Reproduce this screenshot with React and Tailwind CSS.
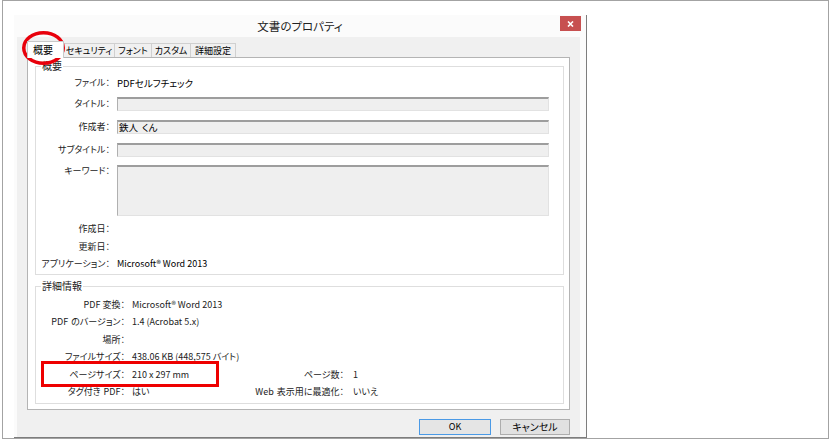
import React from 'react'

const font = "font-['Noto_Sans_CJK_JP','Noto_Sans',sans-serif] [font-feature-settings:'palt']"

function Field({ label, children, className = '' }) {
  return (
    <div className={`flex items-center ${className}`}>
      <div className="w-[74px] text-right text-[9px] leading-[12px] text-[#222] whitespace-nowrap">{label}：</div>
      <div className="ml-[7px] flex-1 flex items-center min-w-0">{children}</div>
    </div>
  )
}

function Input({ children, className = 'h-[14px]' }) {
  return (
    <div className={`flex-1 flex bg-[#efefef] border-t-2 border-t-[#9d9d9d] border-l border-l-[#b0b0b0] border-r border-r-[#e2e2e2] border-b border-b-[#e2e2e2] text-[9.5px] leading-[11px] text-black px-[1px] ${className}`}>
      {children}
    </div>
  )
}

function Info({ label, value, extraLabel, extraValue }) {
  return (
    <div className="flex items-center h-[17.5px] text-[9px] leading-[12px] text-[#222] whitespace-nowrap">
      <div className="w-[89px] text-right">{label}：</div>
      <div className={`ml-[7px] ${extraLabel ? 'w-[120px]' : ''}`}>{value}</div>
      {extraLabel && (
        <>
          <div className="w-[92px] text-right">{extraLabel}：</div>
          <div className="ml-[9px]">{extraValue}</div>
        </>
      )}
    </div>
  )
}

export default function App() {
  const tabs = ['セキュリティ', 'フォント', 'カスタム', '詳細設定']
  const tabWidths = ['w-[51px]', 'w-[37px]', 'w-[39px]', 'w-[45px]']

  return (
    <div className={`relative w-[830px] h-[440px] bg-white pl-[2px] ${font}`}>
      <div className="w-[827px] h-[439px] border border-[#a3a3a3] flex items-start">
        {/* dialog window */}
        <div className="ml-[11px] mt-[14px] w-[573px] h-[423px] bg-[#fbfbfb] border-r border-b border-[#7d7d7d] flex flex-col">
          {/* title bar */}
          <div className="grid grid-cols-[1fr_auto_1fr] h-[22px] shrink-0">
            <div />
            <div className="self-center text-[11.5px] leading-[14px] text-[#222]">文書のプロパティ</div>
            <div className="justify-self-end mt-[1px] mr-[5px] w-[21px] h-[15px] bg-[#c75050] flex items-center justify-center">
              <svg width="7" height="6" viewBox="0 0 7 6">
                <path d="M1 0.5L6 5.5M6 0.5L1 5.5" stroke="white" strokeWidth="1.6" />
              </svg>
            </div>
          </div>

          {/* client area */}
          <div className="ml-[3px] mr-[6px] flex-1 bg-[#f0f0f0] pt-[4px] px-[10px]">
            {/* tabs */}
            <div className="flex items-end h-[16px]">
              <div className="relative z-10 -mb-px w-[37px] h-[17px] bg-white border border-b-0 border-[#c9c9c9] text-[10px] leading-[15px] text-black pl-[5px]">
                概要
              </div>
              {tabs.map((t, i) => (
                <div
                  key={t}
                  className={`${tabWidths[i]} h-[14px] bg-[#f0f0f0] border border-b-0 border-l-0 border-[#d0d0d0] text-[9px] leading-[13px] text-black text-center whitespace-nowrap overflow-hidden`}
                >
                  {t}
                </div>
              ))}
            </div>

            {/* tab panel */}
            <div className="h-[353px] bg-white border border-[#b4b4b4] pl-[7px] pr-[5px] pt-[2px]">
              <fieldset className="border border-[#dedede] pr-[14px] pb-[3px] h-[215px]">
                <legend className="ml-[5px] px-[1px] text-[10px] leading-[12px] text-[#222]">概要</legend>
                <Field label="ファイル" className="mt-[4px] h-[14px]">
                  <span className="text-[9.5px] leading-[12px] text-black">PDFセルフチェック</span>
                </Field>
                <Field label="タイトル" className="mt-[7px]">
                  <Input />
                </Field>
                <Field label="作成者" className="mt-[9px]">
                  <Input>
                    <span>鉄人</span>
                    <span className="ml-[4px]">くん</span>
                  </Input>
                </Field>
                <Field label="サブタイトル" className="mt-[9px]">
                  <Input />
                </Field>
                <div className="flex items-start mt-[8px]">
                  <div className="w-[74px] text-right text-[9px] leading-[12px] text-[#222]">キーワード：</div>
                  <div className="ml-[7px] flex-1 flex">
                    <Input className="h-[51px]" />
                  </div>
                </div>
                <Field label="作成日" className="mt-[6px] h-[14px]" />
                <Field label="更新日" className="mt-[4px] h-[14px]" />
                <Field label="アプリケーション" className="mt-[3px] h-[14px]">
                  <span className="text-[9px] leading-[12px] text-black">Microsoft® Word 2013</span>
                </Field>
              </fieldset>

              <fieldset className="mt-[5px] border border-[#dedede] h-[124px]">
                <legend className="ml-[5px] px-[1px] text-[10px] leading-[12px] text-[#222]">詳細情報</legend>
                <div className="mt-[4px]">
                  <Info label="PDF 変換" value="Microsoft® Word 2013" />
                  <Info label={'PDF\u2004のバージョン'} value="1.4 (Acrobat 5.x)" />
                  <Info label="場所" value="" />
                  <Info label="ファイルサイズ" value="438.06 KB (448,575 バイト)" />
                  <Info label="ページサイズ" value="210 x 297 mm" extraLabel="ページ数" extraValue="1" />
                  <Info label={'タグ付き\u2004PDF'} value="はい" extraLabel={'Web\u2004表示用に最適化'} extraValue="いいえ" />
                </div>
              </fieldset>
            </div>

            {/* buttons */}
            <div className="flex justify-end gap-[9px] mt-[9px]">
              <div className="w-[72px] h-[16px] bg-[#e5e5e5] border border-[#4a9ae6] text-[9px] leading-[14px] text-black text-center">OK</div>
              <div className="w-[70px] h-[16px] bg-[#e1e1e1] border border-[#adadad] text-[10px] leading-[14px] text-black text-center">キャンセル</div>
            </div>
          </div>
        </div>
      </div>

      {/* red annotation marks */}
      <svg className="absolute left-0 top-0 pointer-events-none" width="830" height="440">
        <ellipse cx="43.5" cy="48" rx="19.75" ry="15.25" fill="none" stroke="#e8000b" strokeWidth="3.5" />
        <rect x="42.5" y="362.5" width="175" height="23" fill="none" stroke="#ee0000" strokeWidth="3" />
      </svg>
    </div>
  )
}
